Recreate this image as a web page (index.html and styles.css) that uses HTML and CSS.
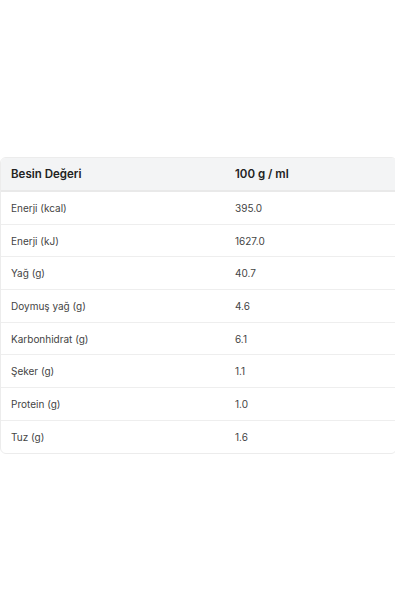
FILE: index.html
```html
<!DOCTYPE html>
<html lang="tr">
<head>
<meta charset="utf-8">
<link rel="stylesheet" href="styles.css">
</head>
<body>
<div class="page">
  <table class="nutri">
    <thead>
      <tr><th>Besin Değeri</th><th>100 g / ml</th></tr>
    </thead>
    <tbody>
      <tr><td>Enerji (kcal)</td><td>395.0</td></tr>
      <tr><td>Enerji (kJ)</td><td>1627.0</td></tr>
      <tr><td>Yağ (g)</td><td>40.7</td></tr>
      <tr><td>Doymuş yağ (g)</td><td>4.6</td></tr>
      <tr><td>Karbonhidrat (g)</td><td>6.1</td></tr>
      <tr><td>Şeker (g)</td><td>1.1</td></tr>
      <tr><td>Protein (g)</td><td>1.0</td></tr>
      <tr><td>Tuz (g)</td><td>1.6</td></tr>
    </tbody>
  </table>
</div>
</body>
</html>
```
FILE: styles.css
```css
html, body { margin: 0; padding: 0; background: #fff; }
body { font-family: Inter, "Noto Sans", sans-serif; color: #333; }
.page { padding-top: 157px; width: 397px; overflow: hidden; }
.nutri {
  width: 397px;
  border-collapse: separate;
  border-spacing: 0;
  border: 1px solid #ececec;
  border-radius: 6px;
  overflow: hidden;
}
.nutri th {
  background: #f3f4f5;
  text-align: left;
  font-size: 11.5px;
  font-weight: 600;
  color: #222;
  height: 32px;
  padding: 0 0 0 10px;
  border-bottom: 2px solid #e9e9e9;
}
.nutri td {
  font-size: 10px;
  color: #444;
  height: 31.7px;
  padding: 0 0 0 10px;
  border-bottom: 1px solid #eeeeee;
}
.nutri tr:last-child td { border-bottom: none; }
.nutri th:first-child, .nutri td:first-child { width: 214px; }
```
